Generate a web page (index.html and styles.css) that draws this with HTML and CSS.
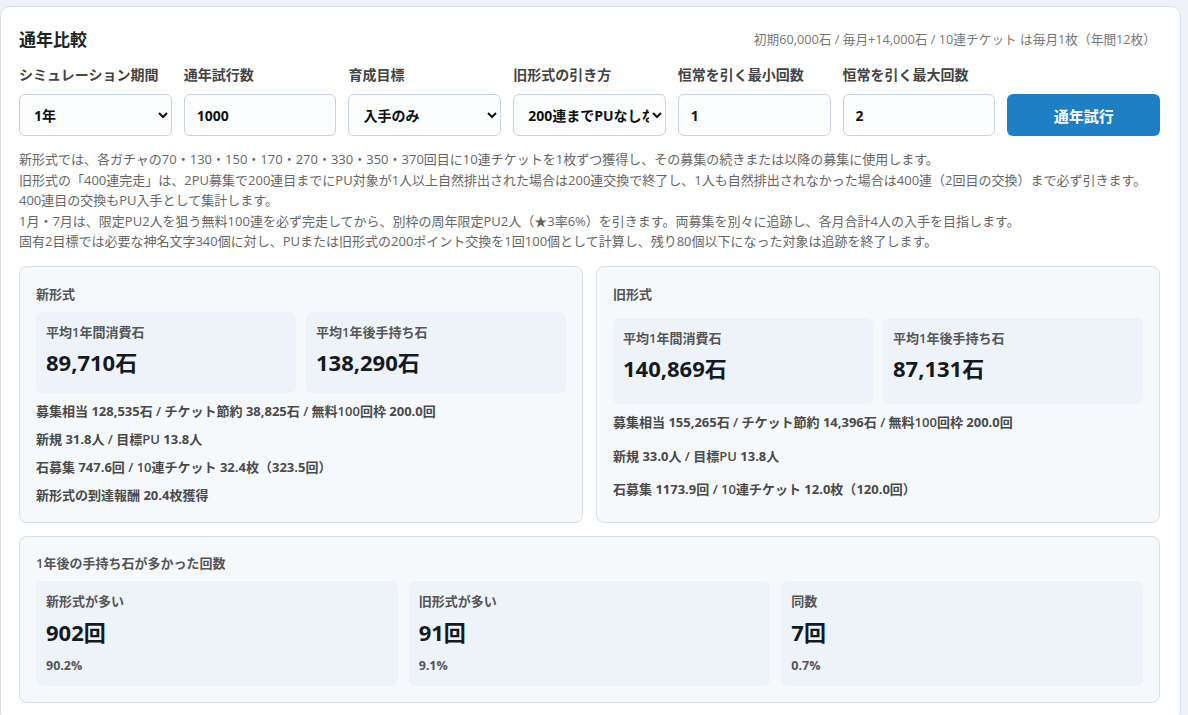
FILE: index.html
```html
<!DOCTYPE html>
<html lang="ja">
<head>
  <meta charset="UTF-8" />
  <meta name="viewport" content="width=device-width, initial-scale=1.0"/>
  <title>通年比較</title>
  <link rel="stylesheet" href="styles.css">
</head>
<body>
  <div class="panel">
    <div class="panel-head">
      <h2>通年比較</h2>
      <span class="note">初期60,000石 / 毎月+14,000石 / 10連チケット は毎月1枚（年間12枚）</span>
    </div>

    <div class="form-row">
      <div class="field">
        <label for="period">シミュレーション期間</label>
        <select id="period">
          <option>1年</option>
          <option>2年</option>
        </select>
      </div>
      <div class="field">
        <label for="trials">通年試行数</label>
        <input type="number" id="trials" value="1000" />
      </div>
      <div class="field">
        <label for="goal">育成目標</label>
        <select id="goal">
          <option>入手のみ</option>
          <option>固有2</option>
        </select>
      </div>
      <div class="field">
        <label for="oldMode">旧形式の引き方</label>
        <select id="oldMode">
          <option>200連までPUなしなら400連完走</option>
          <option>PU入手まで</option>
        </select>
      </div>
      <div class="field">
        <label for="minStd">恒常を引く最小回数</label>
        <input type="number" id="minStd" value="1" />
      </div>
      <div class="field">
        <label for="maxStd">恒常を引く最大回数</label>
        <input type="number" id="maxStd" value="2" />
      </div>
      <div class="field">
        <button class="run">通年試行</button>
      </div>
    </div>

    <div class="desc">
      <p>新形式では、各ガチャの70・130・150・170・270・330・350・370回目に10連チケットを1枚ずつ獲得し、その募集の続きまたは以降の募集に使用します。</p>
      <p>旧形式の「400連完走」は、2PU募集で200連目までにPU対象が1人以上自然排出された場合は200連交換で終了し、1人も自然排出されなかった場合は400連（2回目の交換）まで必ず引きます。400連目の交換もPU入手として集計します。</p>
      <p>1月・7月は、限定PU2人を狙う無料100連を必ず完走してから、別枠の周年限定PU2人（★3率6%）を引きます。両募集を別々に追跡し、各月合計4人の入手を目指します。</p>
      <p>固有2目標では必要な神名文字340個に対し、PUまたは旧形式の200ポイント交換を1回100個として計算し、残り80個以下になった対象は追跡を終了します。</p>
    </div>

    <div class="compare">
      <div class="card">
        <div class="card-title">新形式</div>
        <div class="stats">
          <div class="stat">
            <div class="stat-label">平均1年間消費石</div>
            <div class="stat-value">89,710石</div>
          </div>
          <div class="stat">
            <div class="stat-label">平均1年後手持ち石</div>
            <div class="stat-value">138,290石</div>
          </div>
        </div>
        <div class="line">募集相当 <b>128,535石</b> / チケット節約 <b>38,825石</b> / 無料100回枠 <b>200.0回</b></div>
        <div class="line">新規 <b>31.8人</b> / 目標PU <b>13.8人</b></div>
        <div class="line">石募集 <b>747.6回</b> / 10連チケット <b>32.4枚</b>（<b>323.5回</b>）</div>
        <div class="line">新形式の到達報酬 <b>20.4枚</b>獲得</div>
      </div>

      <div class="card">
        <div class="card-title">旧形式</div>
        <div class="stats">
          <div class="stat">
            <div class="stat-label">平均1年間消費石</div>
            <div class="stat-value">140,869石</div>
          </div>
          <div class="stat">
            <div class="stat-label">平均1年後手持ち石</div>
            <div class="stat-value">87,131石</div>
          </div>
        </div>
        <div class="line">募集相当 <b>155,265石</b> / チケット節約 <b>14,396石</b> / 無料100回枠 <b>200.0回</b></div>
        <div class="line">新規 <b>33.0人</b> / 目標PU <b>13.8人</b></div>
        <div class="line">石募集 <b>1173.9回</b> / 10連チケット <b>12.0枚</b>（<b>120.0回</b>）</div>
      </div>
    </div>

    <div class="card wins">
      <div class="card-title">1年後の手持ち石が多かった回数</div>
      <div class="stats three">
        <div class="stat">
          <div class="stat-label">新形式が多い</div>
          <div class="stat-value">902回</div>
          <div class="stat-sub">90.2%</div>
        </div>
        <div class="stat">
          <div class="stat-label">旧形式が多い</div>
          <div class="stat-value">91回</div>
          <div class="stat-sub">9.1%</div>
        </div>
        <div class="stat">
          <div class="stat-label">同数</div>
          <div class="stat-value">7回</div>
          <div class="stat-sub">0.7%</div>
        </div>
      </div>
    </div>
  </div>
</body>
</html>
```

FILE: styles.css
```css
body {
  margin: 0;
  background: #eef2f6;
  font-family: "Open Sans", "Noto Sans CJK JP", sans-serif;
  color: #333;
}
.panel {
  margin: 6px 7px 0 0;
  background: #fff;
  border: 1px solid #d7e0e9;
  border-radius: 10px;
  padding: 18px 20px 18px 18px;
}
.panel-head {
  display: flex;
  justify-content: space-between;
  align-items: center;
  height: 26px;
}
.panel-head h2 {
  margin: 0;
  font-size: 17px;
  font-weight: 700;
  color: #222;
}
.note {
  font-size: 12.7px;
  color: #777;
  margin-right: 4px;
}
.form-row {
  display: grid;
  grid-template-columns: repeat(7, 1fr);
  column-gap: 12px;
  margin-top: 14px;
}
.field {
  display: flex;
  flex-direction: column;
  justify-content: flex-end;
}
.field label {
  font-size: 14px;
  font-weight: 600;
  color: #444;
  line-height: 20px;
  margin-bottom: 9px;
  white-space: nowrap;
}
.field select,
.field input {
  height: 42px;
  box-sizing: border-box;
  width: 100%;
  border: 1px solid #c8d3de;
  border-radius: 6px;
  background: #fbfdff;
  font-family: inherit;
  font-size: 14px;
  font-weight: 700;
  color: #111;
  padding: 0 12px;
}
.field select {
  padding: 0 0 0 10px;
}
.run {
  height: 42px;
  border: none;
  border-radius: 6px;
  background: #1f7fc4;
  color: #fff;
  font-family: inherit;
  font-size: 15px;
  font-weight: 700;
  cursor: pointer;
}
.desc {
  margin-top: 13px;
  font-size: 13px;
  line-height: 20.6px;
  color: #666;
}
.desc p {
  margin: 0;
}
.compare {
  display: grid;
  grid-template-columns: 1fr 1fr;
  gap: 13px;
  margin-top: 14px;
}
.card {
  display: grid;
  row-gap: 8px;
  background: #f6f9fc;
  border: 1px solid #d6e0ea;
  border-radius: 8px;
  padding: 17px 16px 17px 16px;
}
.card-title {
  font-size: 13px;
  font-weight: 600;
  color: #555;
  line-height: 20px;
}
.stats {
  display: grid;
  grid-template-columns: 1fr 1fr;
  gap: 10px;
}
.stats.three {
  grid-template-columns: 1fr 1fr 1fr;
  gap: 11px;
}
.stat {
  background: #edf3f9;
  border-radius: 6px;
  padding: 10px 10px 16px;
}
.stat-label {
  font-size: 13px;
  font-weight: 600;
  color: #555;
  line-height: 20px;
}
.stat-value {
  font-size: 22px;
  font-weight: 700;
  color: #151a22;
  line-height: 30px;
  margin-top: 5px;
}
.stat-sub {
  font-size: 12.5px;
  font-weight: 700;
  color: #555;
  line-height: 18px;
  margin-top: 10px;
}
.line {
  font-size: 13px;
  font-weight: 600;
  color: #4a4a4a;
  line-height: 20px;
}
.line b {
  font-weight: 700;
}
.wins {
  margin-top: 13px;
  padding: 16px 16px 16px;
}
.wins .stat {
  padding: 10px 10px 11px;
}
.wins .stat-value {
  margin-top: 6px;
}
```
